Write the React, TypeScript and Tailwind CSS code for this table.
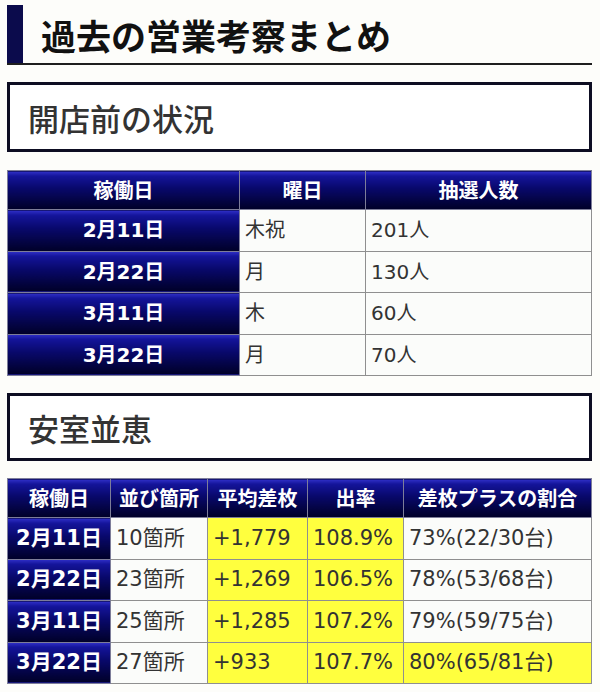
const navy =
  "bg-[linear-gradient(180deg,#3030c8_0%,#14149a_12%,#08086a_45%,#03033f_80%,#000028_100%)]";

const jp = "font-['Noto_Sans_CJK_JP',sans-serif]";
const num = "font-['DejaVu_Sans','Noto_Sans_CJK_JP',sans-serif]";

const schedule = [
  { date: "2月11日", day: "木祝", count: "201人" },
  { date: "2月22日", day: "月", count: "130人" },
  { date: "3月11日", day: "木", count: "60人" },
  { date: "3月22日", day: "月", count: "70人" },
];

const results = [
  { date: "2月11日", spots: "10箇所", diff: "+1,779", rate: "108.9%", share: "73%(22/30台)", hot: false },
  { date: "2月22日", spots: "23箇所", diff: "+1,269", rate: "106.5%", share: "78%(53/68台)", hot: false },
  { date: "3月11日", spots: "25箇所", diff: "+1,285", rate: "107.2%", share: "79%(59/75台)", hot: false },
  { date: "3月22日", spots: "27箇所", diff: "+933", rate: "107.7%", share: "80%(65/81台)", hot: true },
];

const SectionBox = ({ title, h = "h-[70px]" }: { title: string; h?: string }) => (
  <div className={`${h} border-[3px] border-[#0d0d22] bg-white flex items-center pl-[18px]`}>
    <h2 className={`${jp} text-[31px] font-medium text-[#333] leading-none`}>{title}</h2>
  </div>
);

const Head = ({ children }: { children: React.ReactNode }) => (
  <th className={`${navy} ${jp} border border-[#7d7d99] text-white text-[20px] font-bold text-center whitespace-nowrap`}>
    {children}
  </th>
);

const DateCell = ({ children, size = "text-[20px]" }: { children: React.ReactNode; size?: string }) => (
  <td className={`${navy} ${num} ${size} border border-[#7d7d99] text-white font-bold text-center whitespace-nowrap`}>
    {children}
  </td>
);

const Cell = ({ children, yellow, size = "text-[20px]" }: { children: React.ReactNode; yellow?: boolean; size?: string }) => (
  <td
    className={`${num} ${size} border border-[#8f8f8f] text-[#333] pl-[5px] whitespace-nowrap ${
      yellow ? "bg-[#ffff3e]" : "bg-[#fbfcfa]"
    }`}
  >
    {children}
  </td>
);

export default function App() {
  return (
    <div className="w-[600px] h-[692px] bg-[#fdfdfa] pl-[7px] pr-[8px] pt-[5px] overflow-hidden">
      {/* page title */}
      <div className="flex border-b-2 border-[#1e1e1e]">
        <div className="w-[16px] h-[58px] bg-[#0b0b4c]" />
        <h1 className={`${jp} pl-[18px] h-[58px] flex items-center text-[35px] font-bold text-[#111] leading-none`}>
          過去の営業考察まとめ
        </h1>
      </div>

      <div className="mt-[17px]">
        <SectionBox title="開店前の状況" />
      </div>

      <table className="mt-[18px] w-full table-fixed border-collapse">
        <colgroup>
          <col className="w-[232px]" />
          <col className="w-[126px]" />
          <col />
        </colgroup>
        <thead>
          <tr className="h-[39px]">
            <Head>稼働日</Head>
            <Head>曜日</Head>
            <Head>抽選人数</Head>
          </tr>
        </thead>
        <tbody>
          {schedule.map((r) => (
            <tr key={r.date} className="h-[41.5px]">
              <DateCell>{r.date}</DateCell>
              <Cell>{r.day}</Cell>
              <Cell>{r.count}</Cell>
            </tr>
          ))}
        </tbody>
      </table>

      <div className="mt-[17px]">
        <SectionBox title="安室並恵" h="h-[68px]" />
      </div>

      <table className="mt-[17px] w-full table-fixed border-collapse">
        <colgroup>
          <col className="w-[103px]" />
          <col className="w-[97px]" />
          <col className="w-[100px]" />
          <col className="w-[96px]" />
          <col />
        </colgroup>
        <thead>
          <tr className="h-[39px]">
            <Head>稼働日</Head>
            <Head>並び箇所</Head>
            <Head>平均差枚</Head>
            <Head>出率</Head>
            <Head>差枚プラスの割合</Head>
          </tr>
        </thead>
        <tbody>
          {results.map((r) => (
            <tr key={r.date} className="h-[41.5px]">
              <DateCell size="text-[21px]">{r.date}</DateCell>
              <Cell size="text-[21px]">{r.spots}</Cell>
              <Cell size="text-[21px]" yellow>{r.diff}</Cell>
              <Cell size="text-[21px]" yellow>{r.rate}</Cell>
              <Cell size="text-[21px]" yellow={r.hot}>{r.share}</Cell>
            </tr>
          ))}
        </tbody>
      </table>
    </div>
  );
}
